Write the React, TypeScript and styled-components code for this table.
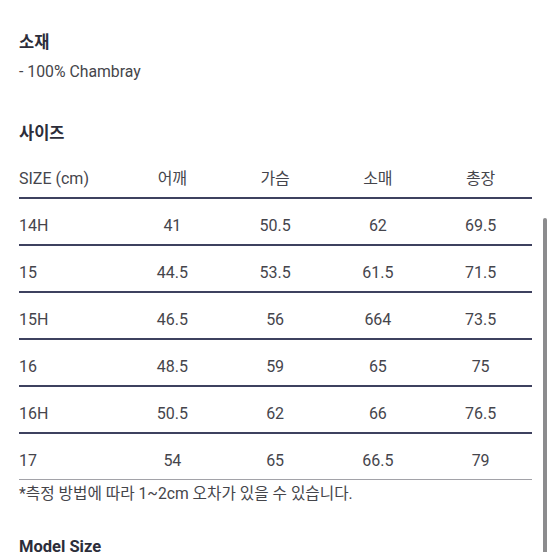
import * as React from "react";
import styled, { createGlobalStyle } from "styled-components";

const GlobalStyle = createGlobalStyle`
  html, body {
    margin: 0;
    padding: 0;
    background: #ffffff;
  }

  body {
    font-family: Roboto, "Noto Sans CJK KR", "Noto Sans", sans-serif;
    color: #3a3a3f;
    overflow: hidden;
  }
`;

const columns = ["SIZE (cm)", "어깨", "가슴", "소매", "총장"];

const rows: string[][] = [
  ["14H", "41", "50.5", "62", "69.5"],
  ["15", "44.5", "53.5", "61.5", "71.5"],
  ["15H", "46.5", "56", "664", "73.5"],
  ["16", "48.5", "59", "65", "75"],
  ["16H", "50.5", "62", "66", "76.5"],
  ["17", "54", "65", "66.5", "79"],
];

export default function App() {
  return (
    <>
      <GlobalStyle />
      <Page>
        <Heading>소재</Heading>
        <Body>- 100% Chambray</Body>

        <Heading $spaced>사이즈</Heading>
        <Table>
          <Row>
            {columns.map((c, i) => (
              <Cell key={c} $first={i === 0}>
                {c}
              </Cell>
            ))}
          </Row>
          {rows.map((r, ri) => (
            <Row key={r[0]} $last={ri === rows.length - 1}>
              {r.map((v, i) => (
                <Cell key={i} $first={i === 0}>
                  {v}
                </Cell>
              ))}
            </Row>
          ))}
        </Table>
        <Note>*측정 방법에 따라 1~2cm 오차가 있을 수 있습니다.</Note>

        <Heading $model>Model Size</Heading>
      </Page>
      <Scrollbar />
    </>
  );
}

const Page = styled.main`
  display: flex;
  flex-direction: column;
  padding: 31px 20px 0 19px;
  width: 552px;
  box-sizing: border-box;
`;

const Heading = styled.h2<{ $spaced?: boolean; $model?: boolean }>`
  margin: ${(p) => (p.$spaced ? "39px" : p.$model ? "30px" : "0")} 0 0;
  font-size: 16.5px;
  line-height: 24px;
  font-weight: 700;
  color: #2c2d3a;
`;

const Body = styled.p`
  margin: 6px 0 0;
  font-size: 15.8px;
  line-height: 22px;
  color: #45454a;
`;

const Table = styled.div`
  display: flex;
  flex-direction: column;
  margin-top: 6px;
`;

const Row = styled.div<{ $last?: boolean }>`
  display: grid;
  grid-template-columns: 102px repeat(4, 1fr);
  padding: 17px 0 8px;
  border-bottom: ${(p) => (p.$last ? "1px solid #a2a2a8" : "2px solid #3e415f")};
  margin-bottom: ${(p) => (p.$last ? "1px" : "0")};
`;

const Cell = styled.div<{ $first?: boolean }>`
  font-size: 16px;
  line-height: 20px;
  color: #45454c;
  text-align: ${(p) => (p.$first ? "left" : "center")};
  white-space: nowrap;
`;

const Note = styled.p`
  margin: 2px 0 0;
  font-size: 15.7px;
  line-height: 22px;
  color: #45454a;
`;

const Scrollbar = styled.div`
  position: fixed;
  top: 218px;
  right: 5px;
  width: 4px;
  height: 340px;
  border-radius: 2px;
  background: #8c8c8e;
`;
